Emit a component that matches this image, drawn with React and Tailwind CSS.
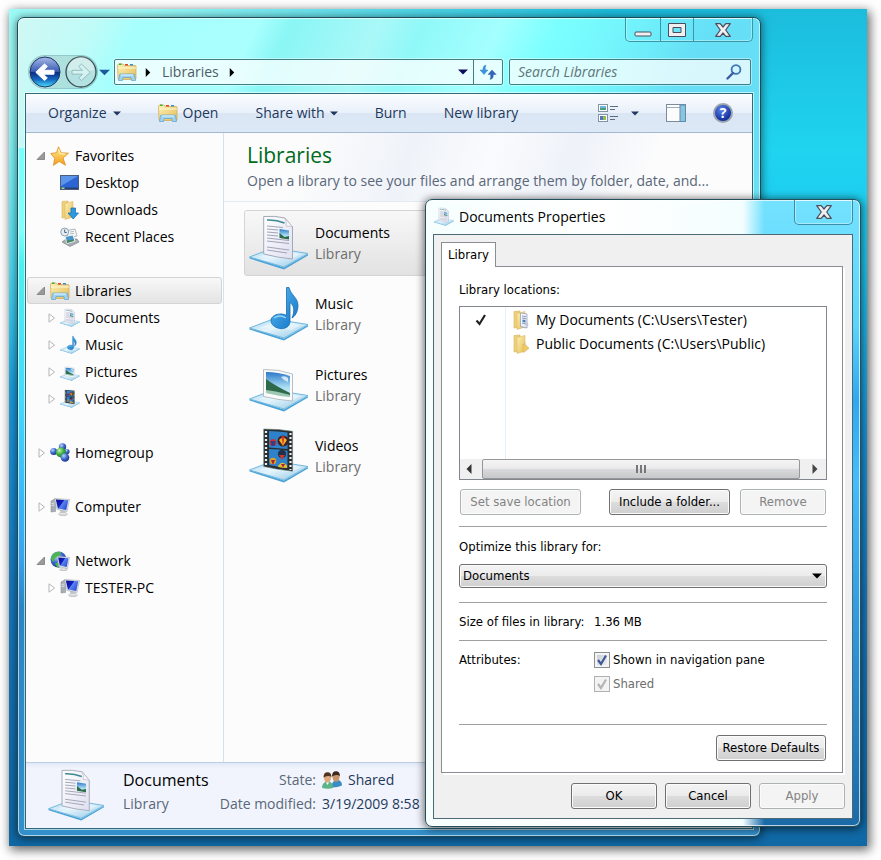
import React, { useState } from "react";

// Shared gradients, referenced by id from the icons below
const IconDefs = () => (
  <svg width="0" height="0" className="absolute" aria-hidden="true">
    <defs>
      <linearGradient id="tray" x1="0" y1="0" x2="1" y2="1">
        <stop offset="0" stopColor="#a9d6ee" />
        <stop offset="0.45" stopColor="#e3f4fc" />
        <stop offset="1" stopColor="#8cc4e4" />
      </linearGradient>
      <linearGradient id="paper" x1="0" y1="0" x2="1" y2="1">
        <stop offset="0" stopColor="#ffffff" />
        <stop offset="1" stopColor="#dfe0f0" />
      </linearGradient>
      <linearGradient id="note" x1="0" y1="0" x2="1" y2="1">
        <stop offset="0" stopColor="#5cc0f5" />
        <stop offset="1" stopColor="#1170c4" />
      </linearGradient>
      <linearGradient id="sky" x1="0" y1="0" x2="0" y2="1">
        <stop offset="0" stopColor="#2a78c8" />
        <stop offset="0.6" stopColor="#a8dcf4" />
        <stop offset="1" stopColor="#e4f4f4" />
      </linearGradient>
      <linearGradient id="folder" x1="0" y1="0" x2="1" y2="1">
        <stop offset="0" stopColor="#fdf2b8" />
        <stop offset="1" stopColor="#e5bb54" />
      </linearGradient>
      <linearGradient id="screen" x1="0" y1="0" x2="1" y2="0.6">
        <stop offset="0" stopColor="#060c88" />
        <stop offset="0.5" stopColor="#1420c4" />
        <stop offset="0.55" stopColor="#5c84f0" />
        <stop offset="1" stopColor="#2c50d8" />
      </linearGradient>
      <linearGradient id="metal" x1="0" y1="0" x2="0" y2="1">
        <stop offset="0" stopColor="#fafafa" />
        <stop offset="1" stopColor="#c4c8cc" />
      </linearGradient>
      <linearGradient id="backBtn" x1="0" y1="0" x2="0" y2="1">
        <stop offset="0" stopColor="#a8bce8" />
        <stop offset="0.48" stopColor="#3a5cb4" />
        <stop offset="0.52" stopColor="#0c2c84" />
        <stop offset="0.75" stopColor="#1568c0" />
        <stop offset="1" stopColor="#48e0fc" />
      </linearGradient>
      <linearGradient id="star" x1="0" y1="0" x2="0" y2="1">
        <stop offset="0" stopColor="#fff08a" />
        <stop offset="1" stopColor="#f59a1e" />
      </linearGradient>
      <radialGradient id="blueBall" cx="0.35" cy="0.3" r="0.8">
        <stop offset="0" stopColor="#b8d4fc" />
        <stop offset="0.5" stopColor="#3c68c8" />
        <stop offset="1" stopColor="#142c80" />
      </radialGradient>
      <radialGradient id="greenBall" cx="0.35" cy="0.3" r="0.8">
        <stop offset="0" stopColor="#c0f4b0" />
        <stop offset="0.5" stopColor="#3cae3c" />
        <stop offset="1" stopColor="#147020" />
      </radialGradient>
    </defs>
  </svg>
);

// Glass tray the library items stand on
const Tray = () => (
  <>
    <path d="M.5 42 35 52.5 59 39v1.5L35 54.5.5 43.5z" fill="#4aa3d8" />
    <path d="M.5 42 24 33l35 5.5L35 52z" fill="url(#tray)" stroke="#6fb7de" strokeWidth="1" />
    <path d="M10 42 26 35l26 4-9 5z" fill="#f2fbff" opacity=".5" />
  </>
);

const DocumentsIcon = ({ className }) => (
  <svg viewBox="0 0 60 56" className={className} aria-hidden="true">
    <Tray />
    <path d="M14.7 1.5Q26 .5 36 3l7.5 9v32Q30 43 14.7 39z" fill="url(#paper)" stroke="#a4a8b8" strokeWidth="1" />
    <path d="M36 3q2 4 1 8 3 0 6.500 1z" fill="#f8f8fc" stroke="#b4b6c4" strokeWidth=".7" />
    <path d="M18 5q9-.5 17.500 3" stroke="#3c8890" strokeWidth="1.600" fill="none" />
    <path d="M18 11l16 1.500M18 14l11 1M18 17l11 1M18 20l11 1M18 23l22 2.500M18 26l22 2.500M18 32l22 3M18 35l20 3" stroke="#a2a4b6" strokeWidth="1" />
    <path d="M30.500 14l9.500 1.500v9l-9.500-1.500z" fill="url(#sky)" />
    <path d="M30.500 18l5 4 4.500-1v3.500l-9.500-1.500z" fill="#2d6a48" />
  </svg>
);

const MusicIcon = ({ className }) => (
  <svg viewBox="0 0 60 56" className={className} aria-hidden="true">
    <Tray />
    <path d="M37.500 1.500h2.500c2 8 9 10 9 18 0 6-3 11-6 12.500 3-7 2-13-2-15.500v19c0 5-5 8-10.500 7-5-1-8.500-4-8.500-8s5-7 11-6.500c2 .2 3.500.8 4.500 1.500z" fill="url(#note)" stroke="#1a6cae" strokeWidth=".8" />
    <path d="M25 32q6-4 12 0" stroke="#8cd4f8" strokeWidth="1.500" fill="none" />
  </svg>
);

const PicturesIcon = ({ className }) => (
  <svg viewBox="0 0 60 56" className={className} aria-hidden="true">
    <Tray />
    <path d="M14.500 12.500Q30 12 43.500 17v27Q29 43 14.500 39.500z" fill="#fafafa" stroke="#a8b0b8" strokeWidth=".8" />
    <path d="M17 15q12 0 24 4v21q-12-1-24-4z" fill="url(#sky)" />
    <path d="M17 22q8 6 24 14v2q-12 0-24-3z" fill="#2e6a4a" />
    <path d="M17 33q10 1 24 5v2q-12-1-24-4z" fill="#9cc8b4" />
    <path d="M32 20q4-2 7 1v4q-4-1-7-5z" fill="#eef8fc" opacity=".8" />
  </svg>
);

const VideosIcon = ({ className }) => (
  <svg viewBox="0 0 60 56" className={className} aria-hidden="true">
    <Tray />
    <path d="M14.700 1Q30 1 43.600 3.300v40Q30 42 14.700 38.500z" fill="#2a2c2e" stroke="#6a8a8a" strokeWidth=".6" />
    <path d="M20 3q9 0 18.500 1.500v16.500Q29 20 20 19.500zM20 21q9 0 18.500 1.800V40Q29 39 20 37z" fill="#2e82cc" />
    <path d="M17 3v35M41.500 5v37" stroke="#e8f0f0" strokeWidth="2.200" strokeDasharray="2 2" />
    <circle cx="24" cy="14.500" r="3.500" fill="#c8342c" />
    <path d="M21.500 13h5l-1 5h-3z" fill="#343c8c" />
    <circle cx="34" cy="13" r="5.500" fill="#3c2028" />
    <path d="M30 12q4-5 8 0l-4 6z" fill="#f0b428" />
    <path d="M32.500 8.500q1.500-1 3 0L34 18z" fill="#d63a26" />
    <circle cx="33" cy="26" r="4" fill="#20304c" />
    <path d="M30 27l3 5 3-5z" fill="#c83a2a" />
    <circle cx="24" cy="33" r="3.300" fill="#d8a02c" />
    <path d="M22 32l2 5 2-5z" fill="#a82434" />
    <path d="M29 38q4-6 9-.5V40q-5 0-9-1z" fill="#e4bc30" />
    <path d="M32 36l2 3.500 2-3.500z" fill="#a82434" />
  </svg>
);

const LibrariesIcon = ({ className }) => (
  <svg viewBox="0 0 20 19" className={className} aria-hidden="true">
    <path d="M.5 3q0-1.500 1.500-1.500h4L7.500 3H18q1 0 1 1v12q0 1-1 1H2q-1 0-1-1z" fill="url(#folder)" stroke="#cfa74c" strokeWidth=".7" />
    <path d="M2 1h2.500v1.500H2z" fill="#3cae3c" />
    <path d="M8 1.500h3V3H8z" fill="#d84a2a" />
    <path d="M13 1.500h3V3h-3z" fill="#3a8cd0" />
    <path d="M1 5.500h18" stroke="#fff8d8" strokeWidth="1" />
    <path d="M3.500 11.500h13q1 0 1 1l1 5.500h-4l-.6-3H6.100l-.6 3h-4l1-5.500q0-1 1-1z" fill="#9fd2ee" stroke="#5ca4d0" strokeWidth=".7" />
    <path d="M4 12.500h12" stroke="#e4f6ff" strokeWidth="1" />
  </svg>
);

const StarIcon = ({ className }) => (
  <svg viewBox="0 0 20 20" className={className} aria-hidden="true">
    <path d="M8.500.8l2.700 6 7.300.4-5.500 4.800 2.500 7.200-6.200-3.700-5.800 3.800 1.200-7L.8 7.500l5.700-.8z" fill="url(#star)" stroke="#e08c20" strokeWidth=".8" />
    <path d="M8.500 3l1.500 4.500 5 .7" stroke="#fffbd0" strokeWidth="1" fill="none" />
  </svg>
);

const DesktopIcon = ({ className }) => (
  <svg viewBox="0 0 20 20" className={className} aria-hidden="true">
    <rect x=".5" y="2.500" width="18" height="14" fill="#2c64d4" stroke="#4c5c7c" />
    <path d="M1 3h17L1 13z" fill="#5c94ec" />
    <path d="M1 14.500h17v1.500H1z" fill="#27406e" />
    <path d="M1.500 14.500h3v1.500h-3z" fill="#8ce08c" />
  </svg>
);

const FolderIcon = ({ className, children }) => (
  <svg viewBox="0 0 20 20" className={className} aria-hidden="true">
    <path d="M12 6l5 9-5 4z" fill="#000" opacity=".12" />
    <path d="M2 1.500l6-.5v16l-6 1z" fill="#f0d278" stroke="#cfa74c" strokeWidth=".5" />
    <path d="M5 3.500l8-2v15.500l-8 2.500z" fill="url(#folder)" stroke="#d4ae54" strokeWidth=".5" />
    {children}
  </svg>
);

const PublicFolderIcon = ({ className }) => (
  <FolderIcon className={className}>
    <path d="M11 10l6 4-6 4.500z" fill="#f0cc60" stroke="#d4ae54" strokeWidth=".5" />
  </FolderIcon>
);

const DownloadsIcon = ({ className }) => (
  <FolderIcon className={className}>
    <path d="M11 8h4.500v5h3L13.200 19 8 13h3z" fill="#2c98e0" stroke="#1468ac" strokeWidth=".7" />
  </FolderIcon>
);

const MyDocsIcon = ({ className }) => (
  <FolderIcon className={className}>
    <path d="M8.500 3l6.500 1v14l-6.500-1.500z" fill="url(#paper)" stroke="#8c98b4" strokeWidth=".7" />
    <path d="M10 6l4 .7M10 8l4 .7M10 13l4 1" stroke="#7c90bc" strokeWidth=".9" />
    <path d="M10.500 9.500l3 .5v2.500l-3-.5z" fill="#4a80c0" />
  </FolderIcon>
);

const RecentIcon = ({ className }) => (
  <svg viewBox="0 0 20 20" className={className} aria-hidden="true">
    <path d="M7 3.500l8-1.500 2 7-9 2z" fill="#f4f6f8" stroke="#94a0a8" strokeWidth=".7" />
    <path d="M10 5l4-.6M10 7l4-.6" stroke="#a4b0b8" strokeWidth=".8" />
    <path d="M2 15l4-3 11 0 2 3-9 4.500z" fill="#a8aeb2" stroke="#7c8488" strokeWidth=".7" />
    <path d="M5 9.500l8-1.500 2 6-8 2.500z" fill="#4a94cc" stroke="#f0f4f6" />
    <path d="M6.500 13.500l7-1 .5 1.500-7 2z" fill="#4c8a5c" />
    <circle cx="4.700" cy="5" r="4" fill="#e4ecf2" stroke="#94a4b0" />
    <path d="M4.700 2.500v3h2" stroke="#4a6484" fill="none" />
  </svg>
);

const HomegroupIcon = ({ className }) => (
  <svg viewBox="0 0 20 20" className={className} aria-hidden="true">
    <circle cx="12.500" cy="4" r="3.700" fill="url(#blueBall)" />
    <circle cx="3.700" cy="8.500" r="3.500" fill="url(#blueBall)" />
    <circle cx="17" cy="8.500" r="2.600" fill="url(#blueBall)" />
    <circle cx="11" cy="9.500" r="5" fill="url(#greenBall)" />
    <circle cx="15" cy="14.500" r="4.300" fill="url(#blueBall)" />
  </svg>
);

const ComputerIcon = ({ className }) => (
  <svg viewBox="0 0 20 20" className={className} aria-hidden="true">
    <path d="M1 4l4.500-2.500v13L1 15z" fill="#a8aeb4" stroke="#7c8488" strokeWidth=".5" />
    <path d="M1.500 6.500l3-.5M1.500 8.500l3-.5" stroke="#eceff1" strokeWidth=".8" />
    <path d="M10 13h5l.5 3h-5z" fill="#c4c8cc" />
    <ellipse cx="13" cy="17" rx="4.500" ry="1.600" fill="url(#metal)" stroke="#9aa0a4" strokeWidth=".4" />
    <path d="M4.500 1.500l15 1-2.500 12-10-2z" fill="#dfe3e7" stroke="#a4acb2" strokeWidth=".6" />
    <path d="M5.800 2.500l12.500.8-2.100 9.800-8.200-1.600z" fill="url(#screen)" />
  </svg>
);

const NetworkIcon = ({ className }) => (
  <svg viewBox="0 0 20 20" className={className} aria-hidden="true">
    <circle cx="8.500" cy="8.500" r="8" fill="url(#blueBall)" />
    <path d="M3 3q4-3 8-2l-2 4-4 2-2 4-2-3zM5 13l3-2 2 4-2 2z" fill="#4cb84c" />
    <ellipse cx="13.500" cy="18.500" rx="4" ry="1.200" fill="url(#metal)" stroke="#9aa0a4" strokeWidth=".4" />
    <path d="M7 5.500l12.500.8-2 11.200-8.500-1.800z" fill="#e2e6ea" stroke="#a4acb2" strokeWidth=".6" />
    <path d="M8.200 6.600l10.200.7-1.700 8.700-6.900-1.400z" fill="url(#screen)" />
  </svg>
);

const UsersIcon = ({ className }) => (
  <svg viewBox="0 0 20 18" className={className} aria-hidden="true">
    <path d="M10 16.500q-1-7 5-7.500 5 0 5 5.500-4 2-10 2z" fill="#3c8cc4" />
    <ellipse cx="14" cy="6" rx="3.500" ry="4.800" fill="#c89468" />
    <path d="M10 5.500Q10 .3 14 .3t4 5.200q-2-2.800-8 0z" fill="#3c2a20" />
    <path d="M0 17q0-6 5.500-6.500T11 17q-5 1.500-11 0z" fill="#5cb488" />
    <ellipse cx="5.500" cy="7" rx="3.500" ry="4.800" fill="#dcaa80" />
    <path d="M1.500 6.500q0-5.200 4-5.200t4 5.200q-2-2.800-8 0z" fill="#50341f" />
    <path d="M4 11.500h3L5.500 14z" fill="#fff" />
  </svg>
);

const CaretDown = ({ className }) => (
  <svg viewBox="0 0 10 6" className={className} aria-hidden="true">
    <path d="M0 .5h10L5 5.500z" fill="currentColor" />
  </svg>
);

const CaretRight = ({ className }) => (
  <svg viewBox="0 0 6 10" className={className} aria-hidden="true">
    <path d="M.5 0v10L5.500 5z" fill="currentColor" />
  </svg>
);

const CloseGlyph = () => (
  <svg viewBox="0 0 16 14" className="w-4 h-3.5" aria-hidden="true">
    <path d="M.7.7h4.500L8 4 10.800.7h4.500L10.700 7l4.600 6.300h-4.500L8 10l-2.800 3.300H.7L5.300 7z" fill="#f0f0f2" stroke="#4a4e5c" strokeWidth="1.200" strokeLinejoin="round" />
  </svg>
);

const treeGroups = [
  [
    { label: "Favorites", icon: StarIcon, open: true },
    { label: "Desktop", icon: DesktopIcon, child: true, leaf: true },
    { label: "Downloads", icon: DownloadsIcon, child: true, leaf: true },
    { label: "Recent Places", icon: RecentIcon, child: true, leaf: true },
  ],
  [
    { label: "Libraries", icon: LibrariesIcon, open: true },
    { label: "Documents", icon: DocumentsIcon, child: true },
    { label: "Music", icon: MusicIcon, child: true },
    { label: "Pictures", icon: PicturesIcon, child: true },
    { label: "Videos", icon: VideosIcon, child: true },
  ],
  [{ label: "Homegroup", icon: HomegroupIcon }],
  [{ label: "Computer", icon: ComputerIcon }],
  [
    { label: "Network", icon: NetworkIcon, open: true },
    { label: "TESTER-PC", icon: ComputerIcon, child: true },
  ],
];

const libraries = [
  { name: "Documents", icon: DocumentsIcon },
  { name: "Music", icon: MusicIcon },
  { name: "Pictures", icon: PicturesIcon },
  { name: "Videos", icon: VideosIcon },
];

const TreeArrow = ({ open, leaf }) => {
  if (leaf) return <span className="w-[10px]" />;
  return (
    <svg viewBox="0 0 10 10" className="w-[10px] h-[10px]" aria-hidden="true">
      {open ? (
        <path d="M8.500 1v7.500H1z" fill="#9a9a9a" stroke="#7a7a7a" strokeWidth=".8" />
      ) : (
        <path d="M3 .8v8.400L8.500 5z" fill="#fff" stroke="#b4b4b4" strokeWidth="1" />
      )}
    </svg>
  );
};

const TreeRow = ({ item, selected, onSelect }) => {
  const Icon = item.icon;
  return (
    <button
      onClick={onSelect}
      className={`w-full h-[27px] flex items-center border rounded-[3px] text-left text-black ${
        item.child ? "pl-[18px]" : "pl-2"
      } ${
        selected
          ? "border-[#d4d4d4] bg-gradient-to-b from-[#f8f8f8] to-[#e4e4e4]"
          : "border-transparent"
      }`}
    >
      <TreeArrow open={item.open} leaf={item.leaf} />
      <Icon className="w-5 h-5 ml-1 mr-[5px]" />
      {item.label}
    </button>
  );
};

// Windows push button
const PushButton = ({ children, className = "", ...props }) => (
  <button
    className={`h-[26px] rounded-[3px] border border-[#707070] bg-[linear-gradient(#f4f4f4,#ebebeb_50%,#dddddd_50%,#cfcfcf)] shadow-[inset_0_0_0_1px_#fbfbfb] text-black disabled:border-[#adb2b5] disabled:bg-none disabled:bg-[#f4f4f4] disabled:text-[#838383] ${className}`}
    {...props}
  >
    {children}
  </button>
);

const CheckBox = ({ label, id, ...props }) => (
  <div className="flex items-center gap-[3px] h-[18px]">
    <span className="grid place-items-center">
      <input
        id={id}
        type="checkbox"
        className="peer col-start-1 row-start-1 appearance-none w-4 h-4 border border-[#8e8f8f] bg-[linear-gradient(135deg,#c4c9d2,#f6f6f6)] shadow-[inset_0_0_0_2px_#f4f4f4] disabled:border-[#b1b1b1] disabled:bg-none disabled:bg-[#f2f2f2]"
        {...props}
      />
      <svg viewBox="0 0 12 12" className="col-start-1 row-start-1 w-3 h-3 text-[#3f5898] pointer-events-none invisible peer-checked:visible peer-disabled:text-[#b4b4b4]" aria-hidden="true">
        <path d="M2 6l3 4L10 1.500" stroke="currentColor" strokeWidth="2.200" fill="none" />
      </svg>
    </span>
    <label htmlFor={id} className={props.disabled ? "text-[#6d6d6d]" : ""}>
      {label}
    </label>
  </div>
);

const Divider = ({ className }) => <hr className={`border-[#a0a0a0] ${className}`} />;

const PropertiesDialog = () => {
  const [shown, setShown] = useState(true);

  return (
    <section
      aria-label="Documents Properties"
      className="absolute top-[190px] right-[6px] w-[436px] flex flex-col px-[7px] pb-[7px] rounded-[7px] border border-[#24505e] bg-[linear-gradient(90deg,#f6fefe_0%,#ffffff_40%,#f4feff_73%,#ffffff00_78%),linear-gradient(#74e2ff,#5ad4fb_20%,#2fa8f0_32%,#46bcfa_45%,#3198dc_68%,#1b6aa8)] shadow-[inset_0_0_0_1px_rgba(255,255,255,0.7),0_1px_9px_1px_rgba(0,0,0,0.6)]"
    >
      <header className="h-[34px] flex items-center">
        <DocumentsIcon className="w-5 h-5 mx-px" />
        <h2 className="flex-1 ml-1 text-sm text-black">Documents Properties</h2>
        <button aria-label="Close" className="self-start w-[59px] h-[25px] flex items-center justify-center border border-t-0 border-[#3a8ca8] rounded-b-[5px] shadow-[inset_0_0_0_1px_rgba(255,255,255,0.4)]">
          <CloseGlyph />
        </button>
      </header>

      <div className="border border-[#4c6a74] bg-[#f0f0f0] px-[7px] pt-[7px] pb-[9px] text-black font-['DejaVu_Sans_Condensed','DejaVu_Sans',sans-serif] text-[13px] leading-[18px]">
        <div role="tablist" className="flex">
          <button role="tab" aria-selected="true" className="relative z-10 -mb-px h-[25px] px-1.5 bg-white border border-b-0 border-[#8b8d94]">
            Library
          </button>
        </div>

        <div role="tabpanel" className="mr-0.5 bg-white border border-[#8b8d94] shadow-[2px_2px_0_#fff] pl-[17px] pr-[15px] pt-3.5 pb-[11px]">
          <div id="locations">Library locations:</div>
          <div className="mt-[7px] border border-[#82878f]">
            <ul aria-labelledby="locations" className="h-[152px] pt-px font-['Open_Sans','Noto_Sans',sans-serif] text-sm bg-[linear-gradient(90deg,#fff_45px,#e6eef8_45px,#e6eef8_46px,#fff_46px)]">
              <li className="h-6 flex items-center">
                <span className="w-[46px] pr-1 flex justify-center">
                  <svg viewBox="0 0 12 12" className="w-3 h-3" aria-hidden="true">
                    <path d="M1.500 6.500l3 3.500L10 1" stroke="#222" strokeWidth="2.200" fill="none" />
                  </svg>
                </span>
                <MyDocsIcon className="w-5 h-5 ml-1.5 mr-1" />
                My Documents (C:\Users\Tester)
              </li>
              <li className="h-6 flex items-center">
                <span className="w-[46px]" />
                <PublicFolderIcon className="w-5 h-5 ml-1.5 mr-1" />
                Public Documents (C:\Users\Public)
              </li>
            </ul>
            <div className="h-5 flex items-stretch bg-[#f0f0f0]">
              <button aria-label="Scroll left" className="w-[22px] pr-1 flex items-center justify-center text-[#333]">
                <CaretRight className="w-[6px] h-2.5 rotate-180" />
              </button>
              <div className="flex-1 mr-1 flex items-center justify-center gap-0.5 border border-[#979797] rounded-[2px] bg-[linear-gradient(#f5f5f5,#e9e9eb_50%,#d9dadc_50%,#c8c8cc)]">
                <span className="w-0.5 h-2 bg-[#777]" />
                <span className="w-0.5 h-2 bg-[#777]" />
                <span className="w-0.5 h-2 bg-[#777]" />
              </div>
              <button aria-label="Scroll right" className="w-[22px] flex items-center justify-center text-[#444]">
                <CaretRight className="w-[6px] h-2.5" />
              </button>
            </div>
          </div>

          <div className="mt-[9px] px-px flex">
            <PushButton disabled className="w-[121px]">Set save location</PushButton>
            <PushButton className="w-[121px] ml-auto mr-2.5">Include a folder...</PushButton>
            <PushButton disabled className="w-[86px]">Remove</PushButton>
          </div>
          <Divider className="mt-[11px]" />

          <label htmlFor="optimize" className="block mt-[11px]">Optimize this library for:</label>
          <div className="mt-2 grid items-center">
            <select id="optimize" className="col-start-1 row-start-1 appearance-none h-6 pl-[3px] rounded-[3px] border border-[#707070] bg-[linear-gradient(#f4f4f4,#ebebeb_50%,#dddddd_50%,#cfcfcf)] shadow-[inset_0_0_0_1px_#fbfbfb]">
              <option>Documents</option>
              <option>Music</option>
              <option>Pictures</option>
              <option>Videos</option>
            </select>
            <CaretDown className="col-start-1 row-start-1 justify-self-end w-[10px] h-1.5 mr-[5px] pointer-events-none" />
          </div>
          <Divider className="mt-3.5" />

          <div className="mt-2.5 grid grid-cols-[135px_1fr]">
            <span className="whitespace-nowrap">Size of files in library:</span>
            <span>1.36 MB</span>
          </div>
          <Divider className="mt-[9px]" />

          <div className="mt-2.5 grid grid-cols-[135px_1fr]">
            <span>Attributes:</span>
            <div className="flex flex-col gap-1.5">
              <CheckBox id="shown" label="Shown in navigation pane" checked={shown} onChange={(e) => setShown(e.target.checked)} />
              <CheckBox id="shared" label="Shared" checked disabled readOnly />
            </div>
          </div>
          <Divider className="mt-[31px]" />

          <div className="mt-2.5 flex justify-end pr-px">
            <PushButton className="w-[110px]">Restore Defaults</PushButton>
          </div>
        </div>

        <div className="mt-2.5 flex justify-end gap-2">
          <PushButton className="w-[86px]">OK</PushButton>
          <PushButton className="w-[86px]">Cancel</PushButton>
          <PushButton disabled className="w-[86px]">Apply</PushButton>
        </div>
      </div>
    </section>
  );
};

const CaptionButtons = () => (
  <div className="flex h-6 border border-t-0 border-[#3a98a4] rounded-b-[5px] shadow-[inset_0_0_0_1px_rgba(255,255,255,0.35)]">
    <button aria-label="Minimize" className="w-[35px] flex items-center justify-center border-r border-[#3a98a4]">
      <svg viewBox="0 0 18 14" className="w-[18px] h-3.5" aria-hidden="true">
        <rect x="1" y="9" width="16" height="4" rx="1" fill="#f0f0f2" stroke="#4a4e5c" />
      </svg>
    </button>
    <button aria-label="Maximize" className="w-[33px] flex items-center justify-center border-r border-[#3a98a4]">
      <svg viewBox="0 0 18 14" className="w-[18px] h-3.5" aria-hidden="true">
        <path d="M.5.5h17v13H.5zM5 4.500v5h8v-5z" fill="#f0f0f2" fillRule="evenodd" stroke="#4a4e5c" />
      </svg>
    </button>
    <button aria-label="Close" className="w-[58px] flex items-center justify-center">
      <CloseGlyph />
    </button>
  </div>
);

const NavigationBar = () => (
  <div className="h-[36px] flex items-center pl-1">
    <div className="flex items-center gap-1 rounded-full bg-black/10 shadow-[0_0_0_1px_rgba(60,110,120,0.35)]">
      <button aria-label="Back">
        <svg viewBox="0 0 32 32" className="w-8 h-8" aria-hidden="true">
          <circle cx="16" cy="16" r="15" fill="url(#backBtn)" stroke="#1c3468" />
          <path d="M15.500 8l2.800 2.500-3.800 3.800H25v3.900H14.500l3.800 3.800-2.800 2.500-8.700-8.200z" fill="#fff" stroke="#fff" strokeLinejoin="round" />
        </svg>
      </button>
      <button aria-label="Forward">
        <svg viewBox="0 0 32 32" className="w-8 h-8" aria-hidden="true">
          <circle cx="16" cy="16" r="15" fill="#b4e2e2" stroke="#3c4c50" strokeWidth="1.300" />
          <path d="M3 14a13 13 0 0 1 26 0q-13 5-26 0z" fill="#e4f6f4" opacity=".6" />
          <path d="M16.500 8l-2.800 2.500 3.800 3.800H7v3.900h10.500l-3.800 3.800 2.800 2.500 8.700-8.200z" fill="#d4f2f0" stroke="#94bcbe" strokeLinejoin="round" />
        </svg>
      </button>
    </div>
    <button aria-label="Recent pages" className="ml-0.5 mr-1 text-[#1c5a9c]">
      <CaretDown className="w-[11px] h-[7px]" />
    </button>

    <nav aria-label="Address" className="flex-1 h-[26px] flex items-center border border-[#3f8088] rounded-[2px] bg-white/75 shadow-[0_0_0_1px_rgba(255,255,255,0.4)]">
      <LibrariesIcon className="w-5 h-5 ml-0.5" />
      <CaretRight className="w-[6px] h-[9px] ml-2 mr-[11px] text-black" />
      <button className="text-sm text-[#4d5c64]">Libraries</button>
      <CaretRight className="w-[6px] h-[9px] ml-2.5 text-black" />
      <button aria-label="Previous locations" className="ml-auto mr-[5px] text-[#0c0c58]">
        <CaretDown className="w-[10px] h-1.5" />
      </button>
      <button aria-label="Refresh" className="h-full w-[29px] flex items-center justify-center border-l border-[#3f8088]">
        <svg viewBox="0 0 18 16" className="w-[18px] h-4" aria-hidden="true">
          <path d="M7 1Q3.800 1.500 3.800 6H1l4 4.500L9 6H6.300Q6 3 7 1z" fill="#3c94dc" stroke="#2878c0" strokeWidth=".4" />
          <path d="M11.200 15.500q3.200-.5 3.200-5h2.800L13 6l-4 4.500h2.700q.3 3-.5 5z" fill="#3464bc" stroke="#24509c" strokeWidth=".4" />
        </svg>
      </button>
    </nav>

    <div className="ml-1.5 mr-0.5 w-[242px] h-[26px] flex items-center border border-[#3f8088] rounded-[2px] bg-white/75 shadow-[0_0_0_1px_rgba(255,255,255,0.4)]">
      <input aria-label="Search Libraries" placeholder="Search Libraries" className="flex-1 min-w-0 pl-2 text-sm italic bg-transparent outline-none placeholder:text-[#5f7478]" />
      <svg viewBox="0 0 16 16" className="w-4 h-4 mr-2" aria-hidden="true">
        <circle cx="10" cy="5.500" r="4.400" fill="#d4f4fc" stroke="#3c74b8" strokeWidth="1.800" />
        <path d="M7 9l-5.500 5.500" stroke="#3a5c9c" strokeWidth="2.400" strokeLinecap="round" />
      </svg>
    </div>
  </div>
);

const Toolbar = () => (
  <div className="h-[39px] flex items-center gap-[37px] pl-[22px] pr-[19px] border-b border-[#a4b8d0] bg-[linear-gradient(#fbfdff,#e9f0fa_50%,#dbe6f5_50%,#dde8f6)] text-[#1e395b]">
    <button className="flex items-center gap-1.5">
      Organize <CaretDown className="w-2 h-[5px]" />
    </button>
    <button className="flex items-center gap-[5px]">
      <LibrariesIcon className="w-5 h-5" /> Open
    </button>
    <button className="flex items-center gap-[5px]">
      Share with <CaretDown className="w-2 h-[5px]" />
    </button>
    <button>Burn</button>
    <button>New library</button>
    <div className="ml-auto flex items-center gap-[27px]">
      <button aria-label="Change your view" className="flex items-center gap-3">
        <svg viewBox="0 0 21 20" className="w-[21px] h-5" aria-hidden="true">
          <rect x=".5" y="1.500" width="9" height="7" fill="#fff" stroke="#8494a8" />
          <rect x=".5" y="11.500" width="9" height="7" fill="#fff" stroke="#8494a8" />
          <path d="M2 3h6v2H2z" fill="#6cb8e4" />
          <path d="M2 5h6v2H2z" fill="#4c9c7c" />
          <path d="M2 13h3v4H2z" fill="#5c70c8" />
          <path d="M5 13h3v4H5z" fill="#8cc048" />
          <path d="M12 3.500h8M12 6.500h5M12 13.500h8M12 16.500h5" stroke="#5c6c84" />
        </svg>
        <CaretDown className="w-2 h-[5px]" />
      </button>
      <button aria-label="Show the preview pane">
        <svg viewBox="0 0 20 18" className="w-5 h-[18px]" aria-hidden="true">
          <rect x=".5" y=".5" width="19" height="17" fill="#fcfcfc" stroke="#7c8c9c" />
          <path d="M1 3.500h13" stroke="#9cacbc" />
          <path d="M14 1h5.500v16.500H14z" fill="#8cc4e0" stroke="#5c8cac" />
        </svg>
      </button>
      <button aria-label="Get help" className="w-5 h-5 rounded-full border-2 border-[#9ca4b0] bg-[radial-gradient(circle_at_40%_30%,#5c84e8,#1c3cac_60%,#101c70)] flex items-center justify-center text-white text-sm leading-none font-bold">
        ?
      </button>
    </div>
  </div>
);

const DetailsPane = () => (
  <footer className="h-[66px] flex items-center pl-[22px] border-t border-[#bccce4] bg-[linear-gradient(#e2eaf8,#f1f4fc_6px)]">
    <DocumentsIcon className="w-[57px] h-[53px]" />
    <div className="ml-[18px] w-[93px] pb-2">
      <div className="text-[16px] leading-6 text-black">Documents</div>
      <div className="leading-6 text-[#5a6779]">Library</div>
    </div>
    <dl className="grid grid-cols-[100px_auto] gap-x-1.5 pb-2 leading-6 whitespace-nowrap">
      <dt className="text-right text-[#5a6779]">State:</dt>
      <dd className="flex items-center gap-1.5 text-[#1e395b]">
        <UsersIcon className="w-5 h-[18px]" /> Shared
      </dd>
      <dt className="text-right text-[#5a6779]">Date modified:</dt>
      <dd className="text-[#1e395b]">3/19/2009 8:58</dd>
    </dl>
  </footer>
);

export default function App() {
  const [selectedNode, setSelectedNode] = useState("Libraries");
  const [selectedLibrary, setSelectedLibrary] = useState("Documents");

  return (
    <div className="min-h-screen flex pt-[9px] pl-[9px] pr-[14px] pb-[14px] bg-white font-['Open_Sans','Noto_Sans',sans-serif] text-sm">
      <IconDefs />
      {/* Desktop */}
      <main className="relative flex-1 flex pt-2 pl-2 pr-[106px] pb-[9px] bg-[radial-gradient(ellipse_70%_45%_at_0_0,#9cfcf8_20%,#9cfcf800_100%),linear-gradient(#1cbcdc,#1fd4f0_17%,#1cc6ee_30%,#1a94d8_50%,#1878bc_70%,#1068a4)] shadow-[2px_3px_10px_1px_rgba(0,0,0,0.6)]">
        {/* Explorer window */}
        <section
          aria-label="Libraries"
          className="flex-1 flex flex-col px-[7px] pb-[7px] rounded-[7px] border border-[#1c4c5c] bg-[linear-gradient(115deg,#d0f8f4_0px,#c0fbf8_70px,#a6fffd_110px,#a8fffe_220px,#8af6f5_250px,#aaf8f8_330px,#90f8f8_370px,#a4ffff_440px,#7cffff_490px,#7cffff00_620px),radial-gradient(ellipse_45%_40%_at_100%_10%,#66def6_20%,#66def600_100%),linear-gradient(#6cfffe,#80fffb_26%,#4df0f0_30%,#44d8fb_47%,#3bb9f8_58%,#3aa2ec_66%,#2b85c3_72%,#3390cb)] bg-[length:100%_130px,100%_100%,100%_100%] bg-no-repeat shadow-[inset_0_0_0_1px_rgba(255,255,255,0.6),0_1px_9px_1px_rgba(0,0,0,0.5)]"
        >
          <header className="h-[36px] flex items-start justify-end">
            <CaptionButtons />
          </header>
          <NavigationBar />

          <div className="mt-[3px] flex-1 flex flex-col border border-[#2c6c78] bg-[#fcfcfc] shadow-[0_0_0_1px_rgba(255,255,255,0.6)]">
            <Toolbar />

            <div className="flex-1 flex">
              <aside className="w-[198px] shrink-0 px-px pt-[9px] flex flex-col gap-[27px] border-r border-[#d6e0f0]">
                {treeGroups.map((group) => (
                  <div key={group[0].label}>
                    {group.map((item) => (
                      <TreeRow
                        key={item.label}
                        item={item}
                        selected={selectedNode === item.label}
                        onSelect={() => setSelectedNode(item.label)}
                      />
                    ))}
                  </div>
                ))}
              </aside>

              <div className="flex-1 min-w-0">
                <div className="h-[69px] pl-[23px] pt-2 border-b border-[#e2eaf2] bg-[linear-gradient(110deg,#fcfcfc_15%,#eff3f9_35%,#fafbfd_50%,#eef2f9_65%,#fcfcfc_80%)]">
                  <h1 className="text-[21px] leading-7 text-[#006a1c]">Libraries</h1>
                  <p className="leading-6 text-[#5a6779] truncate">
                    Open a library to see your files and arrange them by folder, date, and...
                  </p>
                </div>
                <div className="pt-2 pl-5 pr-2 flex flex-col gap-[5px]">
                  {libraries.map(({ name, icon: Icon }) => (
                    <button
                      key={name}
                      onClick={() => setSelectedLibrary(name)}
                      className={`h-[66px] flex items-center pl-1 border rounded-[3px] text-left leading-[21px] ${
                        selectedLibrary === name
                          ? "border-[#d4d4d4] bg-gradient-to-b from-[#f8f8f8] to-[#e2e2e2]"
                          : "border-transparent"
                      }`}
                    >
                      <Icon className="w-[60px] h-14 mr-1.5" />
                      <span>
                        <span className="block text-black">{name}</span>
                        <span className="block text-[#6d6d6d]">Library</span>
                      </span>
                    </button>
                  ))}
                </div>
              </div>
            </div>

            <DetailsPane />
          </div>
        </section>

        <PropertiesDialog />
      </main>
    </div>
  );
}
